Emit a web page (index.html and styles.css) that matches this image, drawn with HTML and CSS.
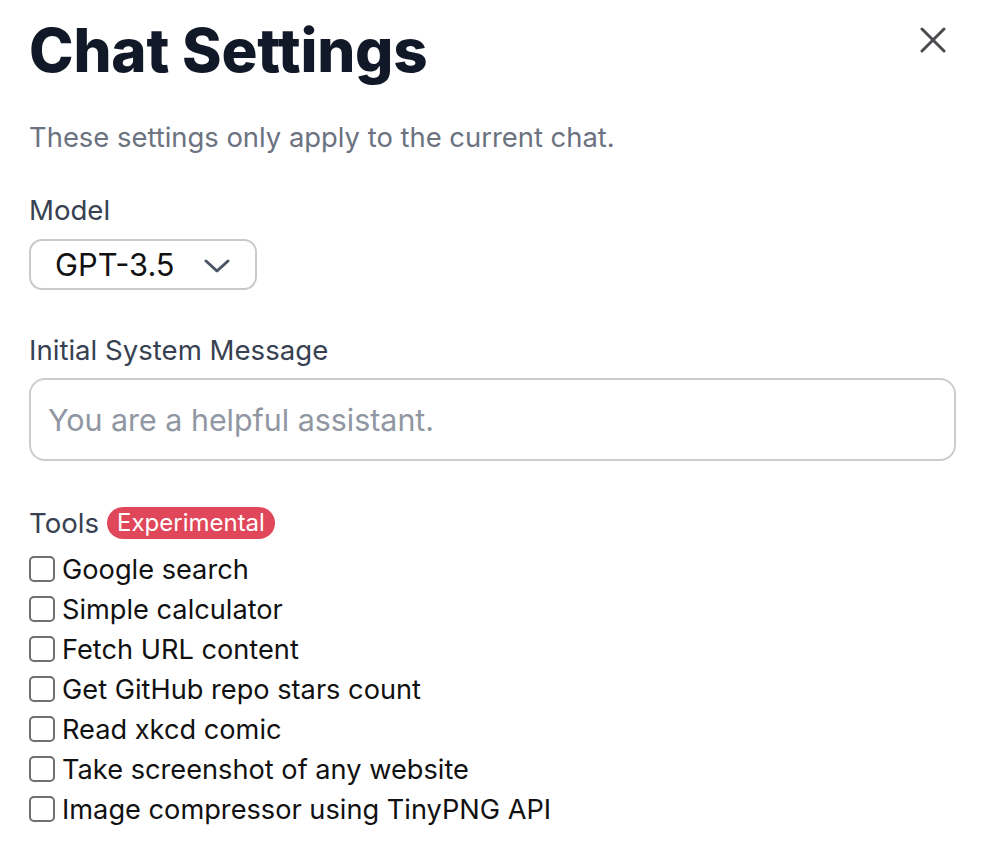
FILE: index.html
```html
<!DOCTYPE html>
<html>
<head>
<meta charset="utf-8">
<link rel="stylesheet" href="styles.css">
</head>
<body>
<div class="modal">
  <header class="head">
    <h1 class="title">Chat Settings</h1>
    <button class="close" aria-label="Close">
      <svg width="26" height="26" viewBox="0 0 26 26"><path d="M2 2 L24 24 M24 2 L2 24" stroke="#4b4b4f" stroke-width="3" stroke-linecap="round" fill="none"/></svg>
    </button>
  </header>
  <p class="subtitle">These settings only apply to the current chat.</p>

  <div class="field">
    <label class="label">Model</label>
    <div class="select">
      <span class="select-text">GPT-3.5</span>
      <svg class="chev" width="26" height="14" viewBox="0 0 26 14"><path d="M2 2 L13 12 L24 2" stroke="#4b5563" stroke-width="3" stroke-linecap="round" stroke-linejoin="round" fill="none"/></svg>
    </div>
  </div>

  <div class="field field-msg">
    <label class="label">Initial System Message</label>
    <div class="textarea"><span class="placeholder">You are a helpful assistant.</span></div>
  </div>

  <div class="field field-tools">
    <div class="label tools-label">Tools <span class="badge">Experimental</span></div>
    <ul class="tools">
      <li><span class="check"></span>Google search</li>
      <li><span class="check"></span>Simple calculator</li>
      <li><span class="check"></span>Fetch URL content</li>
      <li><span class="check"></span>Get GitHub repo stars count</li>
      <li><span class="check"></span>Read xkcd comic</li>
      <li><span class="check"></span>Take screenshot of any website</li>
      <li><span class="check"></span>Image compressor using TinyPNG API</li>
    </ul>
  </div>
</div>
</body>
</html>
```
FILE: styles.css
```css
* { box-sizing: border-box; }
html, body { margin: 0; padding: 0; background: #fff; }
body { font-family: Inter, "Noto Sans", sans-serif; color: #111; }
.modal { padding: 0 34px 0 29px; width: 990px; }
.head { display: flex; justify-content: space-between; align-items: flex-start; padding-top: 14px; }
.title { margin: 0; font-size: 60px; font-weight: 800; color: #111827; line-height: 72px; letter-spacing: -0.2px; }
.close { border: 0; background: none; padding: 0; margin: 13px 10px 0 0; width: 26px; height: 26px; display: block; }
.close svg { display: block; }
.subtitle { margin: 33px 0 0; font-size: 27.4px; color: #6b7280; line-height: 36px; }
.field { margin-top: 39px; }
.label { display: block; font-size: 27.6px; color: #374151; line-height: 32px; }
.select { margin-top: 13px; width: 228px; height: 51px; border: 2px solid #c9c9cc; border-radius: 13px; display: flex; align-items: center; padding-left: 24px; }
.select-text { font-size: 30.8px; color: #111; }
.chev { margin-left: 29px; margin-top: 2px; }
.field-msg { margin-top: 44px; }
.textarea { margin-top: 12px; height: 83px; border: 2px solid #cccccf; border-radius: 16px; display: flex; align-items: center; padding-left: 17px; width: 927px; }
.placeholder { font-size: 30.4px; color: #9097a2; }
.field-tools { margin-top: 46px; }
.tools-label { display: flex; align-items: center; gap: 8px; }
.badge { background: #e0475a; color: #fff; font-size: 24px; line-height: 32px; padding: 0 10px; border-radius: 16px; }
.tools { list-style: none; margin: 10px 0 0; padding: 0; }
.tools li { display: flex; align-items: center; height: 40px; font-size: 27.2px; color: #111; }
.check { width: 26px; height: 26px; border: 2px solid #6e6e73; border-radius: 5px; margin-right: 7px; flex: none; }
```
